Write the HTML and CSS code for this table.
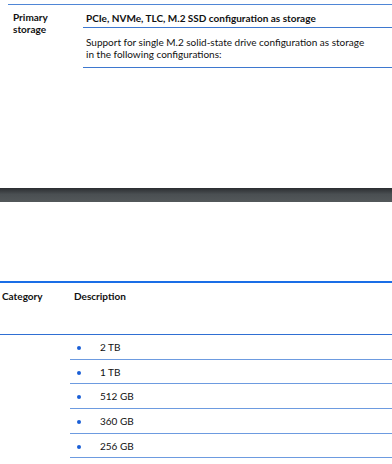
FILE: index.html
```html
<!DOCTYPE html>
<html>
<head>
<meta charset="utf-8">
<link rel="stylesheet" href="styles.css">
</head>
<body>
<section class="spec">
  <div class="spec-row">
    <div class="spec-cat">Primary<br>storage</div>
    <div class="spec-desc">
      <div class="spec-head">PCIe, NVMe, TLC, M.2 SSD configuration as storage</div>
      <div class="spec-body">Support for single M.2 solid-state drive configuration as storage<br>in the following configurations:</div>
    </div>
  </div>
</section>
<div class="page-break"></div>
<section class="table">
  <div class="table-head">
    <div class="th-cat">Category</div>
    <div class="th-desc">Description</div>
  </div>
  <div class="table-body">
    <ul class="items">
      <li>2 TB</li>
      <li>1 TB</li>
      <li>512 GB</li>
      <li>360 GB</li>
      <li>256 GB</li>
    </ul>
  </div>
</section>
</body>
</html>
```
FILE: styles.css
```css
* { box-sizing: border-box; }
html, body { margin: 0; padding: 0; background: #fff; }
body {
  width: 392px;
  height: 464px;
  overflow: hidden;
  font-family: Lato, "Open Sans", sans-serif;
  font-size: 10px;
  color: #111;
}
.spec { padding-top: 4px; padding-left: 8px; height: 188px; }
.spec-row {
  display: flex;
  border-top: 1px solid #4f86d6;
}
.spec-cat {
  width: 75px;
  padding: 7px 0 0 5px;
  font-weight: 700;
  line-height: 11.5px;
}
.spec-desc { flex: 1; }
.spec-head {
  font-weight: 700;
  padding: 7px 0 0 3px;
  height: 23px;
  border-bottom: 1px solid #3e78cf;
}
.spec-body {
  padding: 9px 0 0 3px;
  line-height: 11.5px;
  height: 40px;
  border-bottom: 1px solid #3e78cf;
}
.page-break {
  height: 14px;
  background: linear-gradient(#2b2e31, #4a4f52 45%, #53585a);
}
.table { padding-top: 79px; }
.table-head {
  display: flex;
  border-top: 2px solid #1a6ee6;
  height: 53px;
  padding-top: 7px;
  font-weight: 700;
}
.th-cat { width: 74px; padding-left: 2px; }
.th-desc { flex: 1; }
.table-body { border-top: 1px solid #2f6fd3; padding-left: 70px; }
.items { list-style: none; margin: 0; padding: 0; }
.items li {
  display: flex;
  align-items: center;
  height: 24.7px;
  border-bottom: 1px solid #6d9be0;
  padding-left: 30px;
  position: relative;
}
.items li::before {
  content: "";
  position: absolute;
  left: 7px;
  top: 11px;
  width: 4px;
  height: 4px;
  border-radius: 50%;
  background: #1a5fd6;
}
```
